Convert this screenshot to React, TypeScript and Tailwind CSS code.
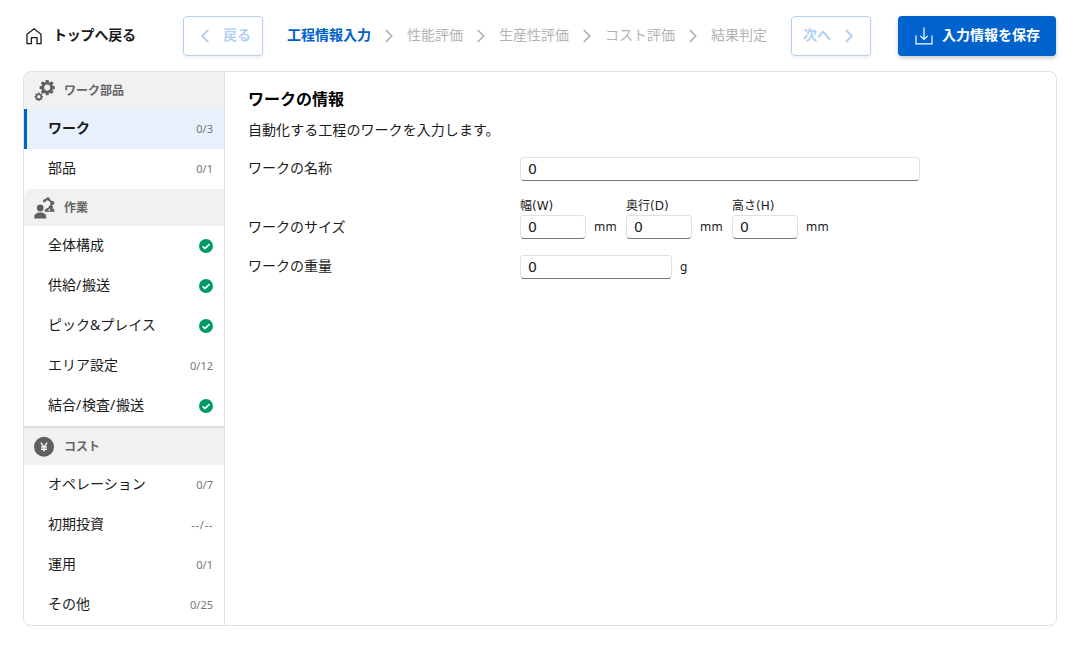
import { Fragment, type ReactNode } from 'react';

function HomeIcon() {
  return (
    <svg className="h-[18px] w-4 shrink-0" viewBox="0 0 16 18" fill="none" stroke="#1b1b1b" strokeWidth="1.3">
      <path d="M1 7.300 8 1.800l7 5.500v9.400h-4v-6H5.400v6H1z" />
    </svg>
  );
}

function Chevron({ left, className, width = 1.5 }: { left?: boolean; className?: string; width?: number }) {
  return (
    <svg className={`h-3.5 w-2 shrink-0 ${className ?? ''}`} viewBox="0 0 8 14" fill="none" stroke="currentColor" strokeWidth={width}>
      <path d={left ? 'M7.2 1 1.200 7l6 6' : 'M.8 1l6 6-6 6'} />
    </svg>
  );
}

function SaveIcon() {
  return (
    <svg className="h-[18px] w-[18px] shrink-0" viewBox="0 0 18 18" fill="none" stroke="white" strokeWidth="1.200">
      <path d="M1 8.500v8.300h16V8.500M9 .5v12M5.300 8.800 9 12.500l3.700-3.700" />
    </svg>
  );
}

function Gear({ x, y, r }: { x: number; y: number; r: number }) {
  return (
    <g transform={`translate(${x} ${y}) scale(${r / 8})`}>
      <circle r="4.600" fill="none" stroke="#5f5f5f" strokeWidth="2.800" />
      {[0, 45, 90, 135, 180, 225, 270, 315].map((a) => (
        <path key={a} d="M-1.500-8h3l.5 3h-4z" fill="#5f5f5f" transform={`rotate(${a})`} />
      ))}
    </g>
  );
}

function GearsIcon() {
  return (
    <svg className="h-[22px] w-[22px]" viewBox="0 0 22 22">
      <Gear x={13.2} y={7.6} r={7.6} />
      <Gear x={4.8} y={16.8} r={4.2} />
    </svg>
  );
}

function WorkIcon() {
  return (
    <svg className="h-[22px] w-[22px]" viewBox="0 0 22 22" fill="#5f5f5f">
      <circle cx="6.200" cy="11" r="3.400" />
      <path d="M.3 21.500V20c0-2.900 2.400-4.500 5.900-4.500s6 1.600 6 4.500v1.500zM10.400 14.800c.3-2 1.500-3.200 3.200-3.700l3.700-3.200 2 2-1 1.400c1.500.5 2.200 1.600 2.500 3.500z" />
      <path d="m10.200 3.800 3.500-2.100 5 4.400-3.200 4.200" fill="none" stroke="#5f5f5f" strokeWidth="1.900" />
      <circle cx="10.400" cy="4" r="1.400" />
      <circle cx="14" cy="1.900" r="1.700" />
      <circle cx="18.400" cy="6" r="2" />
      <circle cx="15.300" cy="12.800" r="1" fill="#f1f1f1" />
    </svg>
  );
}

function YenIcon() {
  return (
    <svg className="h-[22px] w-[22px]" viewBox="0 0 22 22">
      <circle cx="10" cy="10.800" r="10" fill="#5f5f5f" />
      <path d="m6.900 6.600 3.100 4.500 3.100-4.500M10 10.800v4.800M7 11h6M7 13.300h6" fill="none" stroke="#f1f1f1" strokeWidth="1.500" />
    </svg>
  );
}

function CheckIcon() {
  return (
    <svg className="h-3.5 w-3.5" viewBox="0 0 14 14">
      <circle cx="7" cy="7" r="7" fill="#009b63" />
      <path d="m3.600 7.300 2.300 2.200 4.600-4.400" fill="none" stroke="white" strokeWidth="1.700" />
    </svg>
  );
}

function SectionHead({ icon, label, className }: { icon: ReactNode; label: string; className?: string }) {
  return (
    <div className={`flex h-[37px] items-center bg-[#f1f1f1] pl-2.5 text-xs font-bold text-[#666] ${className ?? ''}`}>
      {icon}
      <span className="pl-2">{label}</span>
    </div>
  );
}

function Item({ label, count, active }: { label: string; count?: string; active?: boolean }) {
  return (
    <div
      className={`flex h-10 items-center justify-between pr-[11px] ${
        active ? 'border-l-[3px] border-[#0062cc] bg-[#e8f0fb] pl-[21px] font-bold' : 'pl-6'
      }`}
    >
      <span className="pb-0.5">
        {label.split('/').map((part, i) => (
          <Fragment key={part}>
            {i > 0 && <span className="pr-[0.8px]">/</span>}
            {part}
          </Fragment>
        ))}
      </span>
      {count ? (
        <span className={`text-[11px] font-normal text-[#757575] ${count === '--/--' ? 'tracking-[0.7px]' : ''}`}>{count}</span>
      ) : (
        <CheckIcon />
      )}
    </div>
  );
}

function Field({ className }: { className: string }) {
  return (
    <input
      defaultValue="0"
      className={`h-6 rounded border border-[#e0e0e0] border-b-[#777] bg-white pl-[7px] text-sm text-[#1b1b1b] outline-none [font-family:'DejaVu_Sans',sans-serif] ${className}`}
    />
  );
}

const steps = ['工程情報入力', '性能評価', '生産性評価', 'コスト評価', '結果判定'];

export default function App() {
  return (
    <div className="h-[649px] w-[1080px] bg-white text-sm leading-5 text-[#1b1b1b] [font-family:'Noto_Sans','Noto_Sans_CJK_JP',sans-serif]">
      <header className="flex h-[71px] items-start pt-4 pl-[26px]">
        <div className="flex h-10 w-[157px] items-center gap-[11px] font-bold">
          <HomeIcon />
          <span className="pb-0.5 tracking-[-0.2px]">トップへ戻る</span>
        </div>
        <button className="flex h-10 w-20 items-center rounded border border-[#b2d2f3] pl-[17px] font-bold text-[#b2d2f3] shadow-[0_2px_4px_rgba(0,0,0,0.06)]">
          <Chevron left width={2} />
          <span className="pb-0.5 pl-3.5">戻る</span>
        </button>
        <nav className="ml-6 flex h-10 w-[504px] items-center">
          {steps.map((s, i) => (
            <Fragment key={s}>
              {i > 0 && <Chevron className="mx-3.5 text-[#aaa]" />}
              <span className={`pb-0.5 ${i === 0 ? 'font-bold text-[#0062cc]' : 'text-[#b3b3b3]'}`}>{s}</span>
            </Fragment>
          ))}
        </nav>
        <button className="flex h-10 w-20 items-center rounded border border-[#b2d2f3] pl-[11px] font-bold text-[#b2d2f3] shadow-[0_2px_4px_rgba(0,0,0,0.06)]">
          <span className="pr-3.5 pb-0.5">次へ</span>
          <Chevron width={2} />
        </button>
        <button className="ml-[27px] flex h-10 w-[158px] items-center gap-[9px] rounded bg-[#0062cc] pl-[17px] font-bold text-white shadow-[0_2px_4px_rgba(0,0,0,0.22)]">
          <SaveIcon />
          <span className="pb-0.5">入力情報を保存</span>
        </button>
      </header>
      <div className="ml-[23px] flex h-[555px] w-[1034px] overflow-hidden rounded-lg border border-[#e0e0e0]">
        <aside className="w-[201px] shrink-0 border-r border-[#e0e0e0]">
          <SectionHead icon={<GearsIcon />} label="ワーク部品" />
          <Item label="ワーク" count="0/3" active />
          <Item label="部品" count="0/1" />
          <SectionHead icon={<WorkIcon />} label="作業" className="rounded-tl-lg" />
          <Item label="全体構成" />
          <Item label="供給/搬送" />
          <Item label="ピック&プレイス" />
          <Item label="エリア設定" count="0/12" />
          <Item label="結合/検査/搬送" />
          <div className="h-0.5 bg-[#e0e0e0]" />
          <SectionHead icon={<YenIcon />} label="コスト" />
          <Item label="オペレーション" count="0/7" />
          <Item label="初期投資" count="--/--" />
          <Item label="運用" count="0/1" />
          <Item label="その他" count="0/25" />
        </aside>
        <main className="flex-1 pt-[15px] pl-[23px]">
          <h1 className="h-6 text-base leading-6 font-bold text-black">ワークの情報</h1>
          <p className="mt-[9px] h-5 tracking-[0.06px]">自動化する工程のワークを入力します。</p>
          <div className="mt-[17px] flex h-6 items-center">
            <label className="w-[272px] pb-0.5">ワークの名称</label>
            <Field className="w-[400px]" />
          </div>
          <div className="mt-[17px] flex h-[41px] items-end">
            <label className="flex h-6 w-[272px] items-center">ワークのサイズ</label>
            {[
              ['幅', '(W)'],
              ['奥行', '(D)'],
              ['高さ', '(H)'],
            ].map(([name, axis]) => (
              <div key={axis} className="w-[106px]">
                <div className="h-[17px] text-xs leading-[15px]">
                  {name}
                  <span className="[font-family:'DejaVu_Sans',sans-serif]">{axis}</span>
                </div>
                <div className="flex h-6 items-center">
                  <Field className="w-[66px]" />
                  <span className="pl-2 text-xs tracking-[0.2px]">mm</span>
                </div>
              </div>
            ))}
          </div>
          <div className="mt-4 flex h-6 items-center">
            <label className="w-[272px] pb-0.5">ワークの重量</label>
            <Field className="w-[152px]" />
            <span className="pl-2 text-xs">g</span>
          </div>
        </main>
      </div>
    </div>
  );
}
